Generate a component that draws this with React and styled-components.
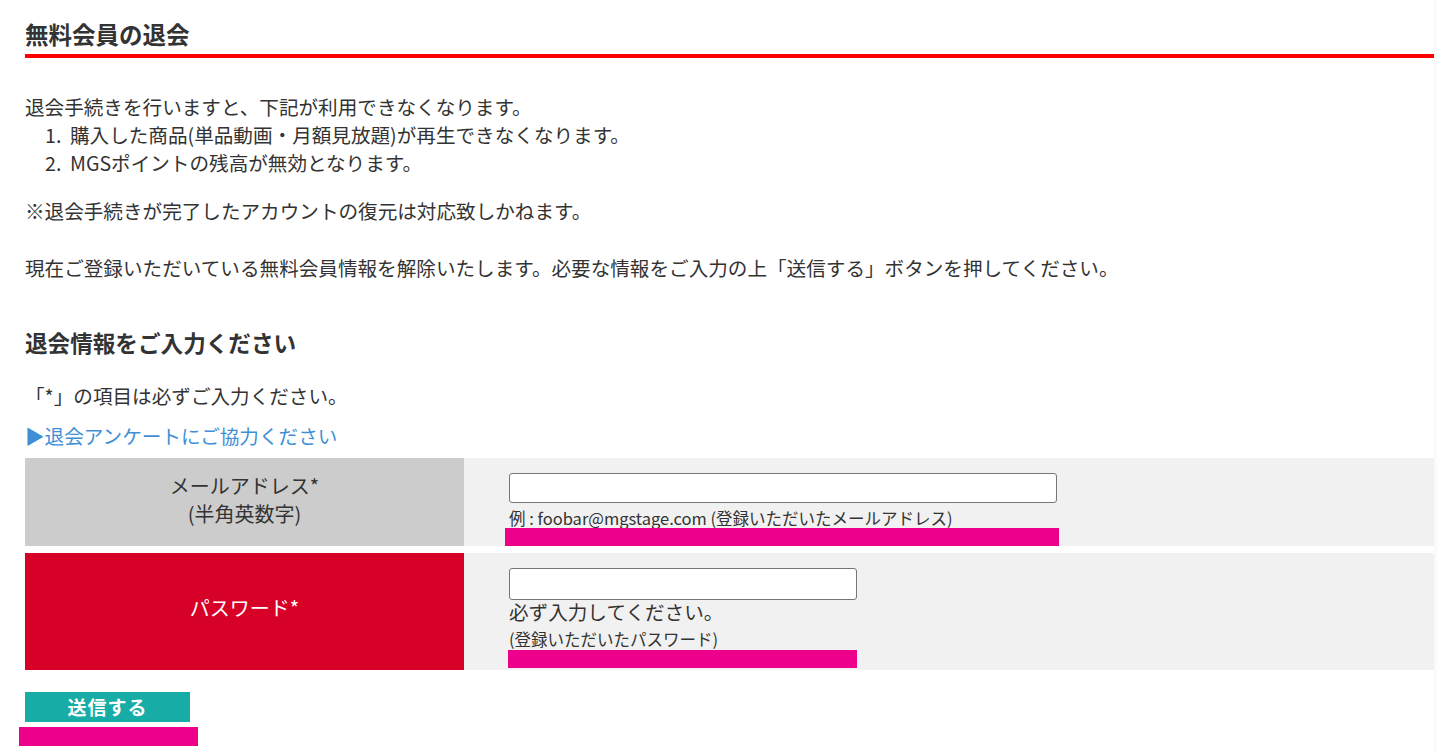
import React from "react";
import styled, { createGlobalStyle } from "styled-components";

const Global = createGlobalStyle`
  html, body { margin: 0; padding: 0; background: #fafafa; }
  body { font-family: "Noto Sans CJK JP", "Noto Sans", sans-serif; color: #333; }
  * { box-sizing: border-box; }
`;

const Page = styled.div`
  width: 1434px;
  background: #fff;
  padding: 19px 0 6px 25px;
  min-height: 751px;
`;

const Title = styled.h1`
  margin: 0;
  font-size: 23.5px;
  line-height: 30px;
  font-weight: 700;
  color: #333;
  padding-bottom: 5px;
  border-bottom: 4px solid #ff0000;
`;

const Para = styled.p`
  margin: ${(p) => p.$mt || 0}px 0 0;
  font-size: 19.6px;
  line-height: 28px;
  color: #333;
`;

const List = styled.ol`
  margin: 0;
  padding-left: 0;
  list-style: none;
  counter-reset: item;
  font-size: 19.6px;
  line-height: 28px;
`;

const Item = styled.li`
  counter-increment: item;
  display: flex;
  padding-left: 20px;
  &::before {
    content: counter(item) ".";
    width: 25px;
    flex: none;
  }
`;

const SubHeading = styled.h2`
  margin: 47px 0 0;
  font-size: 22.6px;
  line-height: 28px;
  font-weight: 700;
  color: #333;
`;

const Link = styled.a`
  display: block;
  margin-top: 12px;
  font-size: 19.6px;
  line-height: 28px;
  color: #3f8fd6;
  text-decoration: none;
`;

const Table = styled.div`
  margin-top: 8px;
  display: flex;
  flex-direction: column;
  gap: 7px;
`;

const Row = styled.div`
  display: flex;
  height: ${(p) => p.$h}px;
`;

const Label = styled.div`
  width: 439px;
  flex: none;
  display: flex;
  flex-direction: column;
  align-items: center;
  justify-content: center;
  text-align: center;
  font-size: 20px;
  line-height: 28px;
  background: ${(p) => (p.$red ? "#d70026" : "#cccccc")};
  color: ${(p) => (p.$red ? "#fff" : "#333")};
  padding-bottom: ${(p) => (p.$red ? 8 : 4)}px;
`;

const Field = styled.div`
  flex: 1;
  background: #f1f1f1;
  padding: 15px 0 0 45px;
  display: flex;
  flex-direction: column;
  align-items: flex-start;
`;

const Input = styled.input`
  width: ${(p) => p.$w}px;
  height: ${(p) => p.$h}px;
  border: 1px solid #767676;
  border-radius: 3px;
  background: #fff;
  margin: 0;
  padding: 0 4px;
  font-family: inherit;
`;

const Hint = styled.div`
  font-size: ${(p) => p.$size || 16.5}px;
  line-height: ${(p) => p.$lh || 20}px;
  margin-top: ${(p) => p.$mt || 0}px;
  color: #333;
  white-space: pre;
`;

const Mask = styled.div`
  background: #ec008c;
  width: ${(p) => p.$w}px;
  height: ${(p) => p.$h}px;
  margin-left: ${(p) => p.$ml || 0}px;
  margin-top: ${(p) => p.$mt || 0}px;
  flex: none;
`;

const Submit = styled.button`
  display: flex;
  align-items: center;
  justify-content: center;
  margin-top: 22px;
  width: 165px;
  height: 30px;
  border: none;
  padding: 0 0 1px;
  background: #17aca5;
  color: #fff;
  font-family: inherit;
  font-size: 19px;
  font-weight: 700;
  letter-spacing: 1px;
  cursor: pointer;
`;

export default function App() {
  return (
    <>
      <Global />
      <Page>
        <Title>無料会員の退会</Title>
        <Para $mt={35}>退会手続きを行いますと、下記が利用できなくなります。</Para>
        <List>
          <Item>購入した商品(単品動画・月額見放題)が再生できなくなります。</Item>
          <Item>MGSポイントの残高が無効となります。</Item>
        </List>
        <Para $mt={20}>※退会手続きが完了したアカウントの復元は対応致しかねます。</Para>
        <Para $mt={29}>
          現在ご登録いただいている無料会員情報を解除いたします。必要な情報をご入力の上「送信する」ボタンを押してください。
        </Para>
        <SubHeading>退会情報をご入力ください</SubHeading>
        <Para $mt={25}>「*」の項目は必ずご入力ください。</Para>
        <Link href="#">▶退会アンケートにご協力ください</Link>
        <Table>
          <Row $h={88}>
            <Label>
              <span>メールアドレス*</span>
              <span>(半角英数字)</span>
            </Label>
            <Field>
              <Input type="text" $w={548} $h={30} />
              <Hint $mt={5}>{"例 : foobar@mgstage.com (登録いただいたメールアドレス)"}</Hint>
              <Mask $w={554} $h={18} $ml={-4} />
            </Field>
          </Row>
          <Row $h={117}>
            <Label $red>
              <span>パスワード*</span>
            </Label>
            <Field>
              <Input type="password" $w={348} $h={32} />
              <Hint $size={19.6} $lh={24}>必ず入力してください。</Hint>
              <Hint $mt={4} $lh={22}>(登録いただいたパスワード)</Hint>
              <Mask $w={349} $h={18} $ml={-1} />
            </Field>
          </Row>
        </Table>
        <Submit type="button">送信する</Submit>
        <Mask $w={179} $h={19} $ml={-6} $mt={5} />
      </Page>
    </>
  );
}
